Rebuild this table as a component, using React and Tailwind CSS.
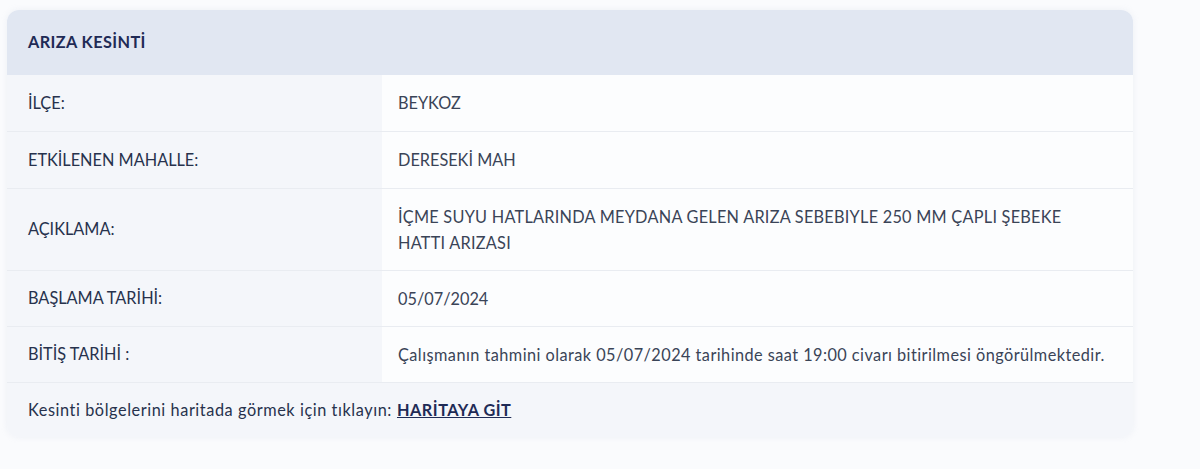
import React from "react";

const rows = [
  { label: "İLÇE:", value: "BEYKOZ", h: "h-[56px]" },
  { label: "ETKİLENEN MAHALLE:", value: "DERESEKİ MAH", h: "h-[57px]" },
  {
    label: "AÇIKLAMA:",
    value: "İÇME SUYU HATLARINDA MEYDANA GELEN ARIZA SEBEBIYLE 250 MM ÇAPLI ŞEBEKE HATTI ARIZASI",
    h: "h-[82px]",
    track: "tracking-[0.25px]",
  },
  { label: "BAŞLAMA TARİHİ:", value: "05/07/2024", h: "h-[56px]" },
  {
    label: "BİTİŞ TARİHİ :",
    value:
      "Çalışmanın tahmini olarak 05/07/2024 tarihinde saat 19:00 civarı bitirilmesi öngörülmektedir.",
    h: "h-[56px]",
    track: "tracking-[0.45px] whitespace-nowrap",
  },
];

export default function App() {
  return (
    <div
      className="w-[1200px] h-[469px] bg-[#fafbfd] pt-[10px] pl-[7px]"
      style={{ fontFamily: "Lato, 'Noto Sans', sans-serif" }}
    >
      <div className="w-[1126px] rounded-xl overflow-hidden shadow-[0_0_6px_rgba(180,190,210,0.18)]">
        <div className="h-[65px] bg-[#e1e7f2] flex items-center pl-[21px] text-[16.3px] tracking-[0.4px] font-bold text-[#1f2b56]">
          ARIZA KESİNTİ
        </div>
        {rows.map((r, i) => (
          <div
            key={i}
            className={`flex ${r.h} ${i > 0 ? "border-t border-[#e9ecf1]" : ""}`}
          >
            <div className="w-[375px] shrink-0 bg-[#f4f6fa] flex items-center pl-[21px] text-[16.3px] text-[#27324d]">
              {r.label}
            </div>
            <div
              className={`flex-1 min-w-0 bg-[#fcfdfe] flex items-center pl-[16px] pr-[26px] text-[16.3px] leading-[26px] text-[#3a4457] ${
                r.track || ""
              }`}
            >
              {r.value}
            </div>
          </div>
        ))}
        <div className="h-[55px] border-t border-[#e9ecf1] bg-[#f4f6fa] flex items-center pl-[21px] text-[16.3px] tracking-[0.57px] text-[#27324d]">
          Kesinti bölgelerini haritada görmek için tıklayın:
          <a href="#" className="ml-[5px] font-bold underline tracking-[0.5px] text-[#1f2b56]">
            HARİTAYA GİT
          </a>
        </div>
      </div>
    </div>
  );
}
